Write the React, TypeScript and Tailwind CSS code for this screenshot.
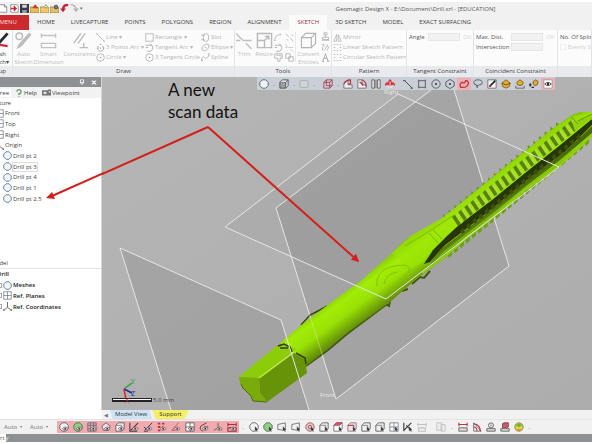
import type { ReactNode } from "react";
import clsx from "clsx";

const DARK = "#4b4f55";
const RED = "#b8323f";

/** Small line drawings, all on a 12x12 grid. */
const ICONS: Record<string, ReactNode> = {
    doc: <><path d="M0 1h6l3 3v7H0" fill="#fff" stroke="#77707f" /><path d="M6 1v3h3" fill="none" stroke="#77707f" /></>,
    docRed: <><path d="M1 1h8l2 2v8H1z" fill="#fff" stroke="#777" /><path d="M1 6h6M5 3l3 3-3 3" fill="none" stroke="#d0233f" strokeWidth="2" /></>,
    save: <><path d="M0 0h12v12H0z" fill="#3b3a44" /><path d="M3 1h6v4H3z" fill="#d8d8e0" /><path d="M3 8h6v4H3z" fill="#9999a8" /></>,
    folderRed: <><path d="M0 4h5l1 1h6v7H0z" fill="#e8bd55" stroke="#9c7a2e" /><path d="M4 5l3-4 3 4z" fill="#cf2f31" stroke="#cf2f31" /></>,
    folder: <><path d="M0 4h5l1 1h6v7H0z" fill="#edca6b" stroke="#9c7a2e" /><path d="M5 4l3-3 2 3" fill="none" stroke="#8b7a3d" /></>,
    folderGear: <><path d="M0 4h5l1 1h6v7H0z" fill="#dfc270" stroke="#8c7238" /><circle cx="8" cy="4" r="2.5" fill="#777" stroke="#444" /></>,
    undo: <><path d="M11 1Q4 1 4 8" fill="none" stroke="#c9203a" strokeWidth="3" /><path d="M0 6h8l-4 5z" fill="#c9203a" /></>,
    redo: <><path d="M1 1Q8 1 8 8" fill="none" stroke="#b5b5b5" strokeWidth="2" /><path d="M4 6h8l-4 5z" fill="#b5b5b5" /></>,
    pen: <><path d="M0 7l2 4L11 1" fill="none" stroke="#2b2b2b" strokeWidth="2" /><path d="M0 11l5-2 6 1" fill="none" stroke="#d12640" strokeWidth="1.5" /></>,
    autoSketch: <><circle cx="3" cy="3" r="2.3" fill="none" stroke="#bbb" /><path d="M11 2L4 10l-2 1 1-2 7-8z" fill="#c4c4c4" stroke="#bbb" /></>,
    dimension: <path d="M1 1v3M11 1v3M1 2.500h10M1 8h10v3H1z" fill="none" stroke="#c2c2c2" />,
    constraint: <path d="M2 8l5-7M5 8l5-7M6 11h6M9 8v3" fill="none" stroke="#bcbcbc" />,
    line: <path d="M1 1l10 10M0 1h2M10 11h2" fill="none" stroke="#a9a9a9" />,
    points: <path d="M1 7h2M9 7h2M5 2h2M3 4q-2 6 3 7M9 4q3 6-3 7M6 6v2" fill="none" stroke="#aaa" strokeWidth="1.300" />,
    circleDot: <><circle cx="6" cy="6" r="5" fill="none" stroke="#a6a6a6" /><circle cx="6" cy="6" r="1" fill="#999" /></>,
    rect: <path d="M1 1h10v10H1z" fill="none" stroke="#aaa" />,
    tangent: <path d="M1 3h8M7 1q7 6 0 10H3M1 6h3" fill="none" stroke="#aaa" strokeWidth="1.200" />,
    slot: <><rect x="3" y="1" width="7" height="10" rx="3" fill="none" stroke="#aaa" /><path d="M0 3h5M0 9h5" stroke="#aaa" /></>,
    ellipse: <><ellipse cx="6" cy="6" rx="5.500" ry="3.500" transform="rotate(-40 6 6)" fill="none" stroke="#aaa" /><path d="M5 6h2" stroke="#aaa" /></>,
    spline: <path d="M0 11q2-9 5-5t6-4M0 9h2v2M9 1h2v2" fill="none" stroke="#aaa" />,
    trim: <path d="M0 1l5 5M7 8l4 4M5 6h6M0 6h3" fill="none" stroke="#c0c0c0" />,
    resize: <path d="M1 1h10v10H1zM1 6h5v5M6 6l3-3M6.500 3H9v2.500" fill="none" stroke="#b9b9b9" />,
    arc: <path d="M1 10Q1 2 9 2M0 10h2M9 1v2" fill="none" stroke="#aaa" />,
    cut: <path d="M1 1l4 4M7 7l4 4M9 2l2 2M2 8l2 2" fill="none" stroke="#aaa" />,
    offset: <path d="M1 1h10v6H8v4H5V7H1zM3 3h6v2" fill="none" stroke="#aaa" />,
    copies: <path d="M1 1h6v6H1zM5 5h6v6H5z" fill="none" stroke="#aaa" />,
    box: <path d="M1 4h7v7H1zM1 4l3-3h7L8 4M11 1v7l-3 3" fill="none" stroke="#b3b3b3" strokeWidth="0.800" />,
    stamp: <path d="M4 1h4v3H4zM6 4v3M2 7h8v3H2zM1 11h10" fill="none" stroke="#aaa" />,
    nodes: <path d="M1 2h3v3M2 5v5M8 2l2 4-2 4M4 10l5-7" fill="none" stroke="#aaa" />,
    letterPeak: <path d="M1 11h3M8 11h3M2.500 11L6 1l3.500 10M4 7h4" fill="none" stroke="#999" />,
    mirror: <path d="M5 2v9H1zM7 2v9h4z" fill="none" stroke="#b0b0b0" />,
    dots: <path d="M1 2h2M5 2h2M9 2h2M1 6h2M9 6h2M1 10h2M5 10h2M9 10h2" stroke="#bbb" strokeWidth="1.500" />,
    hex: <path d="M4 1h4l3 3v4l-3 3H4L1 8V4z" fill="#eef3f7" stroke="#626b76" strokeWidth="1.200" />,
    treeHex: <path d="M4 1h4l3 3v4l-3 3H4L1 8V4z" fill="#eff5fb" stroke="#71859c" strokeWidth="1.300" />,
    cube: <><path d="M1 4h7v7H1z" fill="#9aa0a6" stroke={DARK} /><path d="M1 4l3-3h7L8 4M11 1v7l-3 3" fill="#dfe3e6" stroke={DARK} /></>,
    card: <rect x="1" y="2" width="10" height="8" rx="1" fill="#d1d3d6" stroke="#a5a8ad" />,
    redCube: <path d="M1 4h7v7H1zM4 1h7v7H4zM1 4l3-3M8 4l3-3M8 11l3-3" fill="none" stroke="#a33a48" />,
    sectionL: <><path d="M1 11V6L6 1v6h5v4z" fill="#eee" stroke="#666" /><path d="M1 6q2-5 8-5v5H6" fill="none" stroke={RED} strokeWidth="1.400" /></>,
    sectionR: <><path d="M1 1h5v6h5v4H1z" fill="#eee" stroke="#666" /><path d="M6 1q5 2 5 8M3 4q3 0 4 4" fill="none" stroke={RED} strokeWidth="1.400" /></>,
    columns: <path d="M1 1h3v10H1zM8 1h3v10H8zM6 1v10" fill="#eee" stroke="#555" />,
    burst: <><path d="M4 4V2l2-2 2 2v2h2l2 2v2H0V6l2-2z" fill="#d13a45" /><path d="M1 8h3v3M8 11V8h3M6 3v8" fill="none" stroke="#fbe4e6" /></>,
    darkLine: <path d="M2 2l9 9M0 2h3M9 11h3" fill="none" stroke={DARK} strokeWidth="1.200" />,
    square: <><path d="M2 2h8v8H2z" fill="none" stroke={DARK} /><path d="M1 1h2v2H1zM9 1h2v2H9zM1 9h2v2H1zM9 9h2v2H9z" fill="#777" /></>,
    target: <><circle cx="6" cy="6" r="5" fill="none" stroke={DARK} /><circle cx="6" cy="6" r="1.200" fill="#333" /></>,
    hexDot: <><path d="M6 0.500l5 3v5l-5 3-5-3v-5z" fill="none" stroke={DARK} /><circle cx="6" cy="6" r="1.200" fill="#333" /></>,
    lasso: <path d="M2 10Q0 5 4 4q3 2 4-2 4 0 3 4-1 5-9 4z" fill="none" stroke="#c22f3d" strokeWidth="1.500" />,
    loop: <path d="M5 10L4 7Q1 7 1 4t5-3 5 3-3 3l-3 1v3" fill="none" stroke={DARK} />,
    brush: <><path d="M1 1h10v10H1z" fill="#f4f4f4" stroke="#666" /><path d="M3 9l7-7" stroke="#222" strokeWidth="2" /><path d="M2 10l3-1-1-2z" fill="#b22" /></>,
    bucket: <><path d="M1 5l5-4 5 4-1 4-4 2-4-2z" fill="#edae28" stroke="#77561a" /><path d="M1 5l5 2 5-2" fill="none" stroke="#5b4521" /></>,
    bucketLine: <><path d="M2 4l4-3 4 3-1 3-3 1-3-1z" fill="#e9ab2b" stroke="#77561a" /><path d="M1 8v3h10V8" fill="none" stroke="#555" /></>,
    bucketDots: <><path d="M5 3l3-2 3 2-1 4-3 1-2-2z" fill="#e9ab2b" stroke="#77561a" /><path d="M0 7h3M1.500 5v4M3 10h3" stroke="#333" strokeWidth="1.500" /></>,
    eye: <><path d="M1 1h10v10H1z" fill="#fff" stroke="#999" /><path d="M2 6q4-4 8 0-4 4-8 0z" fill="#fff" stroke="#333" /><circle cx="6" cy="6" r="1.500" fill="#333" /></>,
    help: <><path d="M3 4q0-3 3-3t3 3-3 3v2" fill="none" stroke="#6c9872" strokeWidth="2" /><circle cx="6" cy="11" r="1" fill="#6c9872" /></>,
    camera: <><path d="M0 3h8v7H0zM8 2h4v8H8z" fill="#6f7478" /><path d="M2 5h4v3H2zM9 4h2v2H9z" fill="#e1e4e5" /></>,
    plane: <path d="M1 1h10v10H1zM6 1v10M1 6h10" fill="#fff" stroke="#717b86" />,
    axes: <path d="M6 0v7M6 7l-5 4M6 7l5 4M0 9v2h2M12 9v2h-2" fill="none" stroke="#444" />,
    /* display filters, an item with an eye over it */
    fHex: <path d="M4 1h4l3 3v4l-3 3H4L1 8V4z" fill="#f5f1f2" stroke="#5a555b" />,
    fGreen: <path d="M4 1h4l3 3v4l-3 3H4L1 8V4z" fill="#8fcf83" stroke="#4b6b4c" />,
    fGrid: <path d="M1 1h10v10H1zM4 1v10M8 1v10M1 4h10M1 8h10" fill="#dcb5b9" stroke="#75606a" />,
    fPoly: <path d="M1 5l5-4 5 4-2 5H3z" fill="#f0e4e6" stroke="#5a555b" />,
    fSolid: <><path d="M1 4l3-3h7v7l-3 3H1z" fill="#f0f0f3" stroke="#555" /><path d="M1 4h7v7" fill="none" stroke="#777" /></>,
    fSlash: <path d="M1 1v10h9M2 10l9-9" fill="none" stroke="#493d43" strokeWidth="1.300" />,
    fPen: <path d="M2 10l9-9M1 6l4 3M1 11h5" fill="none" stroke="#493d43" strokeWidth="1.200" />,
    fDots: <path d="M1 2h3M6 2h3M1 6h3M6 6h1M1 10h3" stroke="#bd3044" strokeWidth="2.200" />,
    fRedLine: <path d="M1 10l8-9M1 10h4" fill="none" stroke="#c24958" />,
    fPlane: <path d="M1 1h10v10H1zM6 1v10M1 6h10" fill="#fff" stroke="#555" />,
    fCurve: <path d="M9 1L2 5q-2 5 3 6M6 6h5" fill="none" stroke="#5b4b52" strokeWidth="1.200" />,
    fAxis: <path d="M6 1v6l-5 3M6 7l5 3" fill="none" stroke="#5b4b52" />,
    fRuler: <path d="M1 1v4M11 1v4M1 3h10M1 7h10v4H1z" fill="none" stroke="#a2303f" strokeWidth="1.300" />,
    quad: <path d="M1 3l9-2v9l-9-1z" fill="none" stroke="#666" />,
    redRound: <><circle cx="6" cy="6" r="5" fill="#e9c9cc" stroke="#9f4851" /><circle cx="6" cy="6" r="2" fill="none" stroke="#9f4851" /></>,
    redTop: <><path d="M1 4l3-3h7v7l-3 3H1z" fill="#fff" stroke="#666" /><path d="M1 4l3-3h7L8 4z" fill="#dc6070" stroke="#a74450" /></>,
    redFace: <><path d="M1 4l3-3h7v7l-3 3H1z" fill="#f7dfe2" stroke="#777" /><path d="M1 4h7v7" fill="none" stroke="#c04454" strokeWidth="1.300" /></>,
    sketchSel: <path d="M1 1v10M1 10l9-9M4 4l6 6" fill="none" stroke="#333" strokeWidth="1.300" />,
    grayRuler: <path d="M1 1v4M11 1v4M1 3h10M2 7h8v4H2z" fill="none" stroke="#c0c0c0" strokeWidth="1.300" />,
    pages: <path d="M1 1h6v9H1zM6 3h5v8H6z" fill="#eee" stroke="#bdbdbd" />,
    ruler: <><path d="M1 1v4M11 1v4M1 3h10" stroke={RED} strokeWidth="1.300" /><path d="M1 7h10v4H1z" fill="#ddd" stroke="#555" /></>,
    angle: <><path d="M2 1v10h9z" fill="#eee" stroke="#666" /><path d="M2 2q8 1 8 9M2 6q4 0 4 5" fill="none" stroke={RED} strokeWidth="1.300" /></>,
    gauge: <><circle cx="6" cy="4" r="3" fill="#eee" stroke="#555" /><path d="M6 3v2M1 8h10v3H1z" fill="#ddd" stroke="#555" /></>,
    redBlock: <><path d="M3 2l2-1h5v5l-2 1H3z" fill="#cf5966" stroke="#733b42" /><path d="M1 8h10v3H1z" fill="#ddd" stroke="#555" /></>,
    ball: <><circle cx="6" cy="6" r="5" fill="#e8cf3f" stroke="#74803b" /><path d="M2 4q4-4 8 0l-4 2z" fill="#64b24b" /><path d="M3 9q3 3 6 0z" fill="#dd7646" /></>,
};

const EYE = <><path d="M4 8q3.500-4 7 0-3.500 4-7 0z" fill="#f3e5e6" stroke="#574c51" strokeWidth="0.800" /><circle cx="7.500" cy="8" r="1.200" fill="#413b40" /></>;
const CURSOR = <path d="M7 5v6l1.500-1 1 2 1-1-1-1.500L11 9z" fill="#333" stroke="#eee" strokeWidth="0.300" />;

type IconProps = { name: string; className?: string; overlay?: ReactNode };

const Icon = ({ name, className = "size-[9px]", overlay }: IconProps) => (
    <svg viewBox="0 0 12 12" className={clsx("shrink-0", className)} aria-hidden="true">
        {ICONS[name]}
        {overlay}
    </svg>
);

const TABS = ["HOME", "LIVECAPTURE", "POINTS", "POLYGONS", "REGION", "ALIGNMENT", "SKETCH", "3D SKETCH", "MODEL", "EXACT SURFACING"];

const TitleBar = () => (
    <header className="flex h-[15px] items-center border-t-2 border-white bg-[#f1f1f2]">
        <div className="flex w-[84px] shrink-0 gap-px">
            {["doc", "docRed", "save", "folderRed", "folder", "folderGear", "undo", "redo"].map((name) => (
                <button key={name} aria-label={name} className="flex w-[9px]">
                    <Icon name={name} />
                </button>
            ))}
            <span className="text-[5px] leading-[9px] text-gray-500">▾</span>
        </div>
        <h1 className="flex-1 pl-[240px] pr-[85px] text-center whitespace-nowrap text-[#555]">
            Geomagic Design X - E:\Document\Drill.xrl - [EDUCATION]
        </h1>
    </header>
);

const RibbonTabs = () => (
    <nav className="flex h-[15px] bg-[#f1f1f2] leading-[15px] text-[#3c3c3c]">
        <button className="flex w-[29px] shrink-0 justify-end overflow-hidden bg-[#cb2a2f] pr-3 text-[#fbd9d9]">MENU</button>
        {TABS.map((tab) => (
            <button
                key={tab}
                className={clsx("shrink-0 px-2 whitespace-nowrap", tab === "SKETCH" && "bg-[#fbfbfb] font-medium text-[#9a3438]")}
            >
                {tab}
            </button>
        ))}
    </nav>
);

type GroupProps = { title: string; className: string; children: ReactNode };

const Group = ({ title, className, children }: GroupProps) => (
    <section className={clsx("flex flex-col overflow-hidden border-r border-[#e2e3e5]", className)}>
        <div className="flex h-[36px] pt-[2px]">{children}</div>
        <h2 className="h-[11px] bg-[#e9eaed] text-center leading-[11px] whitespace-nowrap text-[#444]">{title}</h2>
    </section>
);

/** Big ribbon button with the label in one or two lines under the icon. */
const BigTool = ({ icon, lines, className }: { icon: string; lines: string[]; className: string }) => (
    <button className={clsx("flex shrink-0 flex-col items-center leading-[8px] whitespace-nowrap text-[#bdbdbd]", className)}>
        <Icon name={icon} className="mb-px size-[17px]" />
        {lines.map((line) => (
            <span key={line}>{line}</span>
        ))}
    </button>
);

const ToolColumn = ({ items, className }: { items: [string, string][]; className: string }) => (
    <div className={clsx("flex shrink-0 flex-col", className)}>
        {items.map(([icon, label]) => (
            <button key={label} className="flex h-[10px] items-center gap-px whitespace-nowrap text-[#b5b5b5]">
                <Icon name={icon} />
                {label}
            </button>
        ))}
    </div>
);

const Field = ({ label, ok, className }: { label: string; ok?: boolean; className: string }) => (
    <div className="flex h-[10px] items-center">
        <label htmlFor={label} className={clsx("whitespace-nowrap text-[#555]", className)}>{label}</label>
        <input id={label} className="h-[8px] w-[32px] border border-[#e6e6e6] bg-[#f2f2f2]" />
        {ok && <button className="ml-[3px] text-[#d8d8d8]">OK</button>}
    </div>
);

const Ribbon = () => (
    <div className="flex bg-[#fbfbfb]">
        <Group title="Setup" className="w-[13px] shrink-0 items-end [&>h2]:w-[13px] [&>h2]:flex [&>h2]:justify-end [&>h2]:pr-[6px]">
            <button className="flex w-[12px] flex-col items-end pr-[3px] leading-[8px] text-[#444]">
                <Icon name="pen" className="mb-px size-[17px]" />
                <span className="pr-[3px]">Mesh</span>
                <span>Sketch▾</span>
            </button>
        </Group>
        <Group title="Draw" className="w-[222px] shrink-0">
            <BigTool icon="autoSketch" lines={["Auto", "Sketch"]} className="w-[21px]" />
            <BigTool icon="dimension" lines={["Smart", "Dimension"]} className="w-[29px]" />
            <BigTool icon="constraint" lines={["Constraints"]} className="w-[33px]" />
            <ToolColumn className="w-[49px]" items={[["line", "Line ▾"], ["points", "3 Points Arc ▾"], ["circleDot", "Circle ▾"]]} />
            <ToolColumn className="w-[56px]" items={[["rect", "Rectangle ▾"], ["tangent", "Tangent Arc ▾"], ["circleDot", "3 Tangent Circle"]]} />
            <ToolColumn className="w-[32px]" items={[["slot", "Slot"], ["ellipse", "Ellipse ▾"], ["spline", "Spline"]]} />
        </Group>
        <Group title="Tools" className="w-[97px] shrink-0">
            <BigTool icon="trim" lines={["Trim"]} className="w-[19px]" />
            <BigTool icon="resize" lines={["Resize"]} className="w-[20px]" />
            <div className="grid h-[30px] w-[22px] grid-cols-2 items-center border-r border-[#e8e8e8]">
                {["arc", "cut", "tangent", "trim", "offset", "copies"].map((name) => (
                    <button key={name} aria-label={name}><Icon name={name} /></button>
                ))}
            </div>
            <BigTool icon="box" lines={["Convert", "Entities"]} className="w-[25px]" />
            <div className="flex h-[30px] flex-col justify-between">
                {["stamp", "nodes", "letterPeak"].map((name) => (
                    <button key={name} aria-label={name}><Icon name={name} /></button>
                ))}
            </div>
        </Group>
        <Group title="Pattern" className="w-[75px] shrink-0">
            <ToolColumn
                className="pl-px"
                items={[["mirror", "Mirror"], ["dots", "Linear Sketch Pattern"], ["dots", "Circular Sketch Pattern"]]}
            />
        </Group>
        <Group title="Tangent Constraint" className="w-[67px] shrink-0">
            <div className="pl-[2px]">
                <Field label="Angle" ok className="w-[19px]" />
            </div>
        </Group>
        <Group title="Coincident Constraint" className="w-[84px] shrink-0">
            <div className="pl-[2px]">
                <Field label="Max. Dist." ok className="w-[35px]" />
                <Field label="Intersection" className="w-[35px]" />
            </div>
        </Group>
        <Group title="" className="min-w-0 flex-1">
            <div className="pl-[2px] leading-[10px] whitespace-nowrap text-[#555]">
                <p>No. Of Splines</p>
                <label className="flex items-center gap-[2px] text-[#cfcfcf]">
                    <input type="checkbox" className="size-[6px] appearance-none border border-[#eee] bg-white" />
                    Evenly Spaced
                </label>
            </div>
        </Group>
    </div>
);

const FEATURES: [string, string][] = [
    ["plane", "Front"], ["plane", "Top"], ["plane", "Right"], ["axes", "Origin"],
    ["treeHex", "Drill pt 2"], ["treeHex", "Drill pt 3"], ["treeHex", "Drill pt 4"], ["treeHex", "Drill pt 1"], ["treeHex", "Drill pt 2.5"],
];

const MODEL_ITEMS: [string, string][] = [["treeHex", "Meshes"], ["plane", "Ref. Planes"], ["axes", "Ref. Coordinates"]];

const Sidebar = () => (
    <aside className="flex w-[102px] shrink-0 flex-col border-r border-[#d5d5d5] bg-white text-[#444]">
        <div className="flex h-[10px] items-center justify-end gap-[6px] bg-[#8d9194] pr-1 leading-none text-white">
            <svg viewBox="0 0 8 8" className="size-[6px]" aria-hidden="true">
                <path d="M2 1h4v4H2zM1 5h6M4 5v3" fill="none" stroke="#fff" />
            </svg>
            <button aria-label="Close" className="text-[7px] font-bold">✕</button>
        </div>
        <div className="flex h-[11px] items-center bg-[#f2f2f2]">
            <button className="flex w-[11px] justify-end overflow-hidden bg-white pr-[2px]">Tree</button>
            <button className="ml-1 flex items-center"><Icon name="help" className="mr-px size-[8px]" />Help</button>
            <button className="ml-[5px] flex items-center"><Icon name="camera" className="mr-px size-[9px]" />Viewpoint</button>
        </div>
        <h2 className="flex h-[10px] w-[11px] items-center justify-end overflow-hidden">Feature</h2>
        <ul className="grid h-[96px] auto-rows-fr">
            {FEATURES.map(([icon, label]) => (
                <li key={label} className={clsx("flex items-center", icon === "treeHex" ? "pl-[3px]" : "-ml-[5px]")}>
                    <Icon name={icon} className="mr-px size-[9px]" />
                    <span className={clsx(label === "Drill pt 3" && "outline outline-[#ddd]")}>{label}</span>
                </li>
            ))}
        </ul>
        <h2 className="mt-[55px] flex h-[10px] w-full border-b border-[#e4e4e4]">
            <span className="flex w-[8px] justify-end overflow-hidden leading-[8px]">Model</span>
        </h2>
        <ul className="grid h-[43px] auto-rows-fr font-semibold text-[#222]">
            <li className="flex w-[9px] items-center justify-end overflow-hidden">Drill</li>
            {MODEL_ITEMS.map(([icon, label]) => (
                <li key={label} className="flex items-center gap-px">
                    <span className="h-[5px] w-[2px] border-y border-r border-[#aaa]" />
                    <Icon name={icon} />
                    {label}
                </li>
            ))}
        </ul>
    </aside>
);

const VIEW_TOOLS = [
    "hex", ".", "cube", ".", "card", ".", "|", "redCube", ".", "sectionL", "sectionR", "columns", "burst", "|", "darkLine", "square",
    "target", "hexDot", "lasso", "loop", "brush", "bucket", "bucketLine", "bucketDots", "eye",
];

const ViewToolbar = () => (
    <div className="absolute top-0 left-[155px] flex h-[13px] items-center bg-[#cacfd7]">
        {VIEW_TOOLS.map((name, i) => {
            if (name === ".") return <span key={i} className="w-[6px] text-center leading-[8px]">.</span>;
            if (name === "|") return <span key={i} className="w-[4px]" />;
            return (
                <button
                    key={i}
                    aria-label={name}
                    className={clsx("flex h-[12px] w-[14px] items-center justify-center", (name === "lasso" || name === "eye") && "bg-[#eeb0b5]")}
                >
                    <Icon name={name} className="size-[10px]" />
                </button>
            );
        })}
    </div>
);

/** Evenly spaced points from one place to another. */
const spread = (count: number, [x1, y1]: [number, number], [x2, y2]: [number, number]) =>
    Array.from({ length: count }, (_, i) => ({
        x: x1 + ((x2 - x1) * i) / (count - 1),
        y: y1 + ((y2 - y1) * i) / (count - 1),
    }));

/** Threaded tap, square shank at the lower left, flute running to the upper right. */
const Drill = () => (
    <g>
        <path d="M301 325l9-10 10-5 7-4" fill="none" stroke="#354a0b" strokeWidth="1.5" />
        <path d="M306 366L328 350 347 334 367 319 387 304M384 303l5 3 1-5M402 291l6-2M412 284l8-7 4 1 6-7" fill="none" stroke="#40570c" strokeWidth="2" />
        {spread(21, [443, 217], [556, 125]).map(({ x, y }) => (
            <path key={x} d={`M${x} ${y + 3}l0-6 4 3-1 4z`} fill="#6a9a10" />
        ))}
        {spread(24, [447, 257], [584, 145]).map(({ x, y }) => (
            <path key={x} d={`M${x} ${y - 3}l5-3 0 4-3 3z`} fill="#6f9f12" />
        ))}
        <path
            d="M280 343L300 326 325 307 363 279 392 253 402 243 412 235 442 219 465 200 495 175 525 151 555 127 572 115 580 112H592V134L580 146 559 166 525 190 492 218 465 239 446 257 438 263 419 277 390 302 347 333 310 363 304 367 294 353z"
            fill="url(#shank)"
        />
        {/* body of the shank blending into the flute */}
        <path d="M392 253L412 235 442 218 495 176 555 127 572 116 592 113V118L572 126 520 167 470 208 450 226 432 246 424 262 410 268z" fill="#9ce507" opacity=".6" />
        <path d="M377 286q-2-20 27-21 13 3-3 14l-14 11M384 284q2-10 13-12" fill="none" stroke="#86c20c" strokeWidth="1" />
        <path d="M405 246l20-12 29-19M429 233l9 10M433 230l9 9" fill="none" stroke="#80b90e" strokeWidth="1" />
        <path d="M424 264L433 250 447 236 459 225 492 200 525 173 559 146 592 119V125L566 151 532 176 498 204 466 229 444 246 430 262z" fill="#27360a" />
        <path d="M430 263L441 249 462 233 498 204 532 176 566 151 592 126V133L559 161 525 187 492 214 465 235 442 253 432 264z" fill="url(#flute)" />
        <path d="M422 273L442 259 465 239 492 218 525 190 559 166 580 147 592 135" fill="none" stroke="#8fd10b" strokeWidth="2" />
        {spread(20, [452, 221], [568, 127]).map(({ x, y }) => (
            <g key={x}>
                <path d={`M${x} ${y - 4}l4-3 6 9-4 3z`} fill="#5b7f0e" />
                <path d={`M${x + 3} ${y - 6}l2-2 6 9-2 2z`} fill="#a8de35" />
                <path d={`M${x + 8} ${y + 10}l3-3 2 4-3 2z`} fill="#3c5409" />
            </g>
        ))}
        <path d="M572 122L592 115V119L575 131z" fill="#90d30a" />
        <path d="M571 117l7 7M578 121l14-7" fill="none" stroke="#6b9a0c" />
        <path d="M239 377l36-30 6-3 15 5-37 29z" fill="#8ccc08" />
        <path d="M259 378L294 353 305 360 307 373 267 402 260 393z" fill="#679308" />
        <path d="M239 377l20 1 1 15 7 9-14-1-2-5-8-7-3-6z" fill="#79ac09" />
        <path d="M259 378l35-26" stroke="#bdf03f" strokeWidth="1.5" />
        <path d="M278 346l6-2 6 3 2 5M280 348h8M296 353l9 5 1 6" fill="none" stroke="#2d3f08" strokeWidth="1.5" />
        <path d="M241 384l2 4 8 8 2 5 14 1" fill="none" stroke="#4d6b0a" />
    </g>
);

const Viewport = () => (
    <main className="relative min-w-0 flex-1">
        <svg viewBox="102 77 490 333" className="block w-full bg-[#b1b1b1]" role="img" aria-label="Model view">
            <defs>
                <linearGradient id="shade" x1="0" y1="0" x2="1" y2="1">
                    <stop offset="0" stopColor="#b5b5b5" />
                    <stop offset="1" stopColor="#adadad" />
                </linearGradient>
                <linearGradient id="shank" gradientUnits="userSpaceOnUse" x1="342" y1="285" x2="368" y2="320">
                    <stop offset="0" stopColor="#7eba06" />
                    <stop offset=".3" stopColor="#a2ed05" />
                    <stop offset=".6" stopColor="#99e006" />
                    <stop offset="1" stopColor="#5c8508" />
                </linearGradient>
                <linearGradient id="flute" gradientUnits="userSpaceOnUse" x1="500" y1="202" x2="509" y2="214">
                    <stop offset="0" stopColor="#4a680b" />
                    <stop offset="1" stopColor="#85bf0e" />
                </linearGradient>
                <marker id="head" viewBox="0 0 10 10" refX="8" refY="5" markerWidth="4" markerHeight="4" orient="auto-start-reverse">
                    <path d="M0 0l10 5-10 5z" fill="#d3201c" />
                </marker>
            </defs>
            <path d="M102 77h490v333H102z" fill="url(#shade)" />
            <path d="M225 227L398 94l161 73-173 132z" fill="#000" opacity=".03" />
            <path d="M276 208L448 77h2l59 189-173 133z" fill="#000" opacity=".07" />
            <path d="M120 248l161 72 28 90H171z" fill="#000" opacity=".08" />
            <path d="M448 77L276 208l60 191 173-133L450 77" fill="none" stroke="#e6e6e6" />
            <Drill />
            <path d="M309 313l15 47" stroke="#d5ee9a" opacity=".5" />
            <g fill="none" stroke="#e6e6e6" strokeWidth="1">
                <path d="M225 227L398 94l161 73-173 132z" />
                <path d="M171 410L120 248l161 72 28 90" />
            </g>
            <g fontSize="6" fill="#e8e8e8">
                <text x="384" y="94">Right</text>
                <text x="320" y="397">Front</text>
            </g>
            <g fill="none" strokeWidth="1.5">
                <path d="M124 389l8-6" stroke="#25a43a" />
                <path d="M124 389l8 4" stroke="#1a2a9e" />
                <path d="M124 389l2 11" stroke="#d02828" />
            </g>
            <path d="M112 398h40v4h-40z" fill="#222" />
            <path d="M113 399h38v1h-38z" fill="#fff" />
            <g fontSize="7">
                <text x="131" y="384" fill="#159a2c">Y</text>
                <text x="131" y="396" fill="#1a2a9e">Z</text>
                <text x="125" y="403" fill="#d02828">X</text>
            </g>
            <text x="153" y="402" fontSize="6" fill="#444">5.0 mm</text>
            <path d="M208 127L102 174" stroke="#d3201c" strokeWidth="2" />
            <path d="M208 127L358 261" fill="none" stroke="#d3201c" strokeWidth="2" markerEnd="url(#head)" />
            <text fontSize="17" fill="#111" fontFamily="Lato, sans-serif">
                <tspan x="168" y="96">A new</tspan>
                <tspan x="168" y="118">scan data</tspan>
            </text>
        </svg>
        {/* the callout's other arm reaches over the feature tree */}
        <svg viewBox="0 0 60 30" className="absolute top-[95px] -left-[58px] w-[60px]" aria-hidden="true">
            <path d="M60 1L8 24" stroke="#d3201c" strokeWidth="2" />
            <path d="M2 26l6-6 3 7z" fill="#d3201c" />
        </svg>
        <ViewToolbar />
    </main>
);

const FILTERS = ["fHex", "fGreen", "fGrid", "fPoly", "fSolid", "fSlash", "fPen", "fDots", "fRedLine", "fPlane", "fCurve", "fAxis", "fRuler"];
const SELECTORS = ["fHex", "fGreen", "quad", "quad", "redRound", "fSolid", "redTop", "redFace", "fSolid", "fSolid", "plane", "sketchSel"];
const MEASURES = ["ruler", "angle", "gauge", "redBlock", "ball"];

const IconRow = ({ names, overlay, className }: { names: string[]; overlay?: ReactNode; className?: string }) => (
    <div className={clsx("flex shrink-0", className)}>
        {names.map((name, i) => (
            <button key={i} aria-label={name} className="flex h-[12px] w-[14px] items-center justify-center">
                <Icon name={name} className="size-[10px]" overlay={overlay} />
            </button>
        ))}
    </div>
);

const AutoSelect = ({ label }: { label: string }) => (
    <div className="flex w-[26px] items-center text-[#777]">
        <select aria-label={label} className="w-[20px] appearance-none bg-transparent pl-1">
            <option>Auto</option>
        </select>
        <span className="text-[4px]">▾</span>
    </div>
);

const Footer = () => (
    <footer className="bg-[#f1f1f2]">
        <div className="flex h-[10px] items-center border-b border-[#e3e3e3]">
            <div className="h-full w-[102px] bg-white" />
            <span className="w-[8px] text-center text-[5px] text-gray-500">◀</span>
            <button className="h-[9px] bg-[#cfe3f6] px-[5px] leading-[9px] [clip-path:polygon(0_0,93%_0,100%_100%,6%_100%)]">Model View</button>
            <button className="h-[9px] bg-[#f7ee68] px-[7px] leading-[9px] [clip-path:polygon(0_0,100%_0,88%_100%,10%_100%)]">Support</button>
        </div>
        <div className="flex h-[14px] items-center">
            <div className="flex w-[57px] shrink-0">
                <AutoSelect label="Units" />
                <AutoSelect label="Precision" />
            </div>
            <IconRow names={FILTERS} overlay={EYE} className="bg-[#efabb0]" />
            <span className="w-[8px] text-center">.</span>
            <IconRow names={SELECTORS} overlay={CURSOR} />
            <IconRow names={["grayRuler"]} />
            <div className="ml-1 border-l border-[#ddd]" />
            <IconRow names={["pages"]} />
            <span className="w-[8px] text-center">.</span>
            <IconRow names={MEASURES} />
            <span className="w-[6px] text-center">.</span>
        </div>
        <div className="flex h-[8px] bg-[#8d9194] leading-[8px] text-[#555]">
            <span className="bg-white pr-px">rt</span>
            <span className="text-[#e8e8e8]">y</span>
        </div>
        <div className="h-[3px] bg-white" />
    </footer>
);

const App = () => (
    <div className="flex min-h-screen flex-col overflow-hidden bg-white font-['Open_Sans','Noto_Sans',sans-serif] text-[6px] leading-[8px] text-[#333]">
        <TitleBar />
        <RibbonTabs />
        <Ribbon />
        <div className="flex">
            <Sidebar />
            <Viewport />
        </div>
        <Footer />
    </div>
);

export default App;
